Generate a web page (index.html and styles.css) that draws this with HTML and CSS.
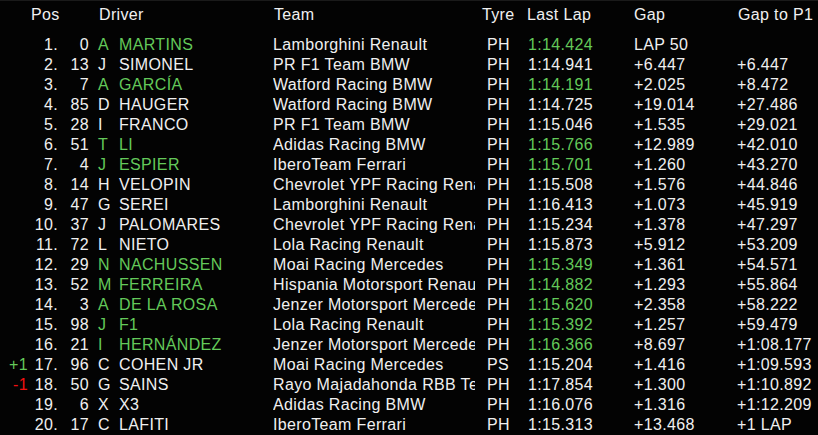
FILE: index.html
```html
<!DOCTYPE html>
<html>
<head>
<meta charset="utf-8">
<link rel="stylesheet" href="styles.css">
</head>
<body>
<div class="board">
  <div class="head">
    <span></span><span>Pos</span><span>Driver</span><span>Team</span><span>Tyre</span><span>Last Lap</span><span>Gap</span><span>Gap to P1</span>
  </div>
  <div class="rows">
    <div class="row fast"><span class="chg"></span><span class="pos">1.</span><span class="num">0</span><span class="ini">A</span><span class="name">MARTINS</span><span class="team">Lamborghini Renault</span><span class="tyre">PH</span><span class="last">1:14.424</span><span class="gap">LAP 50</span><span class="gp1"></span></div>
    <div class="row"><span class="chg"></span><span class="pos">2.</span><span class="num">13</span><span class="ini">J</span><span class="name">SIMONEL</span><span class="team">PR F1 Team BMW</span><span class="tyre">PH</span><span class="last">1:14.941</span><span class="gap">+6.447</span><span class="gp1">+6.447</span></div>
    <div class="row fast"><span class="chg"></span><span class="pos">3.</span><span class="num">7</span><span class="ini">A</span><span class="name">GARCÍA</span><span class="team">Watford Racing BMW</span><span class="tyre">PH</span><span class="last">1:14.191</span><span class="gap">+2.025</span><span class="gp1">+8.472</span></div>
    <div class="row"><span class="chg"></span><span class="pos">4.</span><span class="num">85</span><span class="ini">D</span><span class="name">HAUGER</span><span class="team">Watford Racing BMW</span><span class="tyre">PH</span><span class="last">1:14.725</span><span class="gap">+19.014</span><span class="gp1">+27.486</span></div>
    <div class="row"><span class="chg"></span><span class="pos">5.</span><span class="num">28</span><span class="ini">I</span><span class="name">FRANCO</span><span class="team">PR F1 Team BMW</span><span class="tyre">PH</span><span class="last">1:15.046</span><span class="gap">+1.535</span><span class="gp1">+29.021</span></div>
    <div class="row fast"><span class="chg"></span><span class="pos">6.</span><span class="num">51</span><span class="ini">T</span><span class="name">LI</span><span class="team">Adidas Racing BMW</span><span class="tyre">PH</span><span class="last">1:15.766</span><span class="gap">+12.989</span><span class="gp1">+42.010</span></div>
    <div class="row fast"><span class="chg"></span><span class="pos">7.</span><span class="num">4</span><span class="ini">J</span><span class="name">ESPIER</span><span class="team">IberoTeam Ferrari</span><span class="tyre">PH</span><span class="last">1:15.701</span><span class="gap">+1.260</span><span class="gp1">+43.270</span></div>
    <div class="row"><span class="chg"></span><span class="pos">8.</span><span class="num">14</span><span class="ini">H</span><span class="name">VELOPIN</span><span class="team">Chevrolet YPF Racing Renault</span><span class="tyre">PH</span><span class="last">1:15.508</span><span class="gap">+1.576</span><span class="gp1">+44.846</span></div>
    <div class="row"><span class="chg"></span><span class="pos">9.</span><span class="num">47</span><span class="ini">G</span><span class="name">SEREI</span><span class="team">Lamborghini Renault</span><span class="tyre">PH</span><span class="last">1:16.413</span><span class="gap">+1.073</span><span class="gp1">+45.919</span></div>
    <div class="row"><span class="chg"></span><span class="pos">10.</span><span class="num">37</span><span class="ini">J</span><span class="name">PALOMARES</span><span class="team">Chevrolet YPF Racing Renault</span><span class="tyre">PH</span><span class="last">1:15.234</span><span class="gap">+1.378</span><span class="gp1">+47.297</span></div>
    <div class="row"><span class="chg"></span><span class="pos">11.</span><span class="num">72</span><span class="ini">L</span><span class="name">NIETO</span><span class="team">Lola Racing Renault</span><span class="tyre">PH</span><span class="last">1:15.873</span><span class="gap">+5.912</span><span class="gp1">+53.209</span></div>
    <div class="row fast"><span class="chg"></span><span class="pos">12.</span><span class="num">29</span><span class="ini">N</span><span class="name">NACHUSSEN</span><span class="team">Moai Racing Mercedes</span><span class="tyre">PH</span><span class="last">1:15.349</span><span class="gap">+1.361</span><span class="gp1">+54.571</span></div>
    <div class="row fast"><span class="chg"></span><span class="pos">13.</span><span class="num">52</span><span class="ini">M</span><span class="name">FERREIRA</span><span class="team">Hispania Motorsport Renault</span><span class="tyre">PH</span><span class="last">1:14.882</span><span class="gap">+1.293</span><span class="gp1">+55.864</span></div>
    <div class="row fast"><span class="chg"></span><span class="pos">14.</span><span class="num">3</span><span class="ini">A</span><span class="name">DE LA ROSA</span><span class="team">Jenzer Motorsport Mercedes</span><span class="tyre">PH</span><span class="last">1:15.620</span><span class="gap">+2.358</span><span class="gp1">+58.222</span></div>
    <div class="row fast"><span class="chg"></span><span class="pos">15.</span><span class="num">98</span><span class="ini">J</span><span class="name">F1</span><span class="team">Lola Racing Renault</span><span class="tyre">PH</span><span class="last">1:15.392</span><span class="gap">+1.257</span><span class="gp1">+59.479</span></div>
    <div class="row fast"><span class="chg"></span><span class="pos">16.</span><span class="num">21</span><span class="ini">I</span><span class="name">HERNÁNDEZ</span><span class="team">Jenzer Motorsport Mercedes</span><span class="tyre">PH</span><span class="last">1:16.366</span><span class="gap">+8.697</span><span class="gp1">+1:08.177</span></div>
    <div class="row"><span class="chg up">+1</span><span class="pos">17.</span><span class="num">96</span><span class="ini">C</span><span class="name">COHEN JR</span><span class="team">Moai Racing Mercedes</span><span class="tyre">PS</span><span class="last">1:15.204</span><span class="gap">+1.416</span><span class="gp1">+1:09.593</span></div>
    <div class="row"><span class="chg down">-1</span><span class="pos">18.</span><span class="num">50</span><span class="ini">G</span><span class="name">SAINS</span><span class="team">Rayo Majadahonda RBB Team</span><span class="tyre">PH</span><span class="last">1:17.854</span><span class="gap">+1.300</span><span class="gp1">+1:10.892</span></div>
    <div class="row"><span class="chg"></span><span class="pos">19.</span><span class="num">6</span><span class="ini">X</span><span class="name">X3</span><span class="team">Adidas Racing BMW</span><span class="tyre">PH</span><span class="last">1:16.076</span><span class="gap">+1.316</span><span class="gp1">+1:12.209</span></div>
    <div class="row"><span class="chg"></span><span class="pos">20.</span><span class="num">17</span><span class="ini">C</span><span class="name">LAFITI</span><span class="team">IberoTeam Ferrari</span><span class="tyre">PH</span><span class="last">1:15.313</span><span class="gap">+13.468</span><span class="gp1">+1 LAP</span></div>
  </div>
</div>
</body>
</html>
```

FILE: styles.css
```css
html, body {
  margin: 0;
  padding: 0;
  background: #030303;
}

.board {
  width: 818px;
  height: 435px;
  box-sizing: border-box;
  border-top: 1px solid #1a1a1a;
  padding-top: 4px;
  font-family: "Liberation Sans", Arial, sans-serif;
  font-size: 16px;
  letter-spacing: 0.35px;
  color: #f0f0f0;
  overflow: hidden;
}

.head {
  display: grid;
  grid-template-columns: 31px 68px 175px 208px 45px 107px 104px 1fr;
  height: 20px;
  line-height: 20px;
  margin-bottom: 10px;
  white-space: nowrap;
}

.rows {
  display: flex;
  flex-direction: column;
}

.row {
  display: grid;
  grid-template-columns: 28px 30px 31px 30px 154px 202px 53px 106px 103px 1fr;
  height: 20px;
  line-height: 20px;
  white-space: nowrap;
}

.chg, .pos, .num {
  text-align: right;
}

.ini {
  padding-left: 9px;
}

.team {
  overflow: hidden;
  text-overflow: clip;
}

.tyre {
  padding-left: 12px;
}

.fast .ini,
.fast .name,
.fast .last {
  color: #63c95a;
}

.up {
  color: #63c95a;
}

.down {
  color: #f01010;
}
```
